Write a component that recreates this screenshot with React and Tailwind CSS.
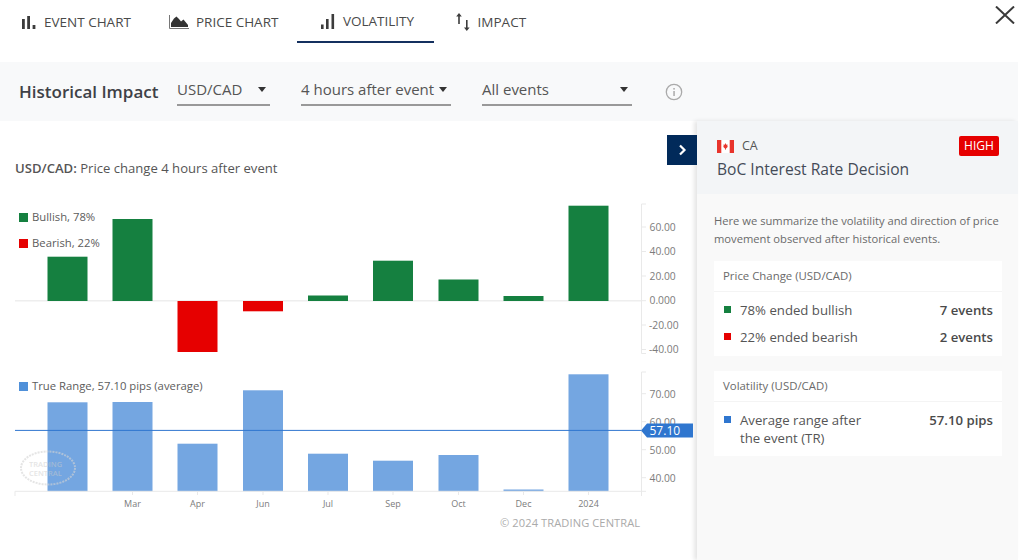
import React from "react";

const X = [47.5, 112.5, 177.5, 243, 308, 373, 438.5, 503.5, 568.5];
const UP = [256.7, 219, 301, 301, 295.5, 260.7, 279.5, 296, 205.7];
const DOWN = [301, 301, 352, 311.3, 301, 301, 301, 301, 301];
const RANGE = [402.3, 402, 443.7, 390.3, 453.7, 460.7, 455, 489.5, 374.3];
const MONTHS = ["", "Mar", "Apr", "Jun", "Jul", "Sep", "Oct", "Dec", "2024"];
const T1 = [["60.00", 227], ["40.00", 251.5], ["20.00", 276], ["0.000", 300.7], ["-20.00", 325], ["-40.00", 349.5]];
const T2 = [["70.00", 394], ["60.00", 422], ["50.00", 450], ["40.00", 478]];

function Tab({ icon, label, active, cls }) {
  return (
    <div className={`flex h-[43px] items-center pt-[1px] text-[13.5px] text-[#4a4a4a] ${active ? "border-b-2 border-[#14305f] pl-[23.5px] pr-[19.5px]" : ""} ${cls}`}>
      {icon}
      <span>{label}</span>
    </div>
  );
}

function BarsIcon() {
  return (
    <svg width="14" height="13" viewBox="0 0 14 13" fill="#3c3c3c">
      <rect x="0" y="3" width="2.8" height="10" />
      <rect x="5.2" y="0" width="2.8" height="13" />
      <rect x="10.6" y="9" width="2.8" height="4" />
    </svg>
  );
}
function AreaIcon() {
  return (
    <svg width="20" height="14" viewBox="0 0 20 14">
      <path d="M0.5 0V13.5H20" fill="none" stroke="#777" strokeWidth="1" />
      <path d="M2 12V8L5 3.5L7.5 1.5L10 4L12 6.5L14.5 4.5L19 10V12Z" fill="#333" />
    </svg>
  );
}
function VolIcon() {
  return (
    <svg width="14" height="15" viewBox="0 0 14 15" fill="#3c3c3c">
      <rect x="0" y="10.5" width="2.6" height="4.5" />
      <rect x="5" y="5" width="2.6" height="10" />
      <rect x="10.5" y="0" width="2.6" height="15" />
    </svg>
  );
}
function ArrowsIcon() {
  return (
    <svg width="14" height="18" viewBox="0 0 14 18" fill="#3c3c3c">
      <path d="M3 0L5.8 3.6H3.8V11H2.2V3.6H0.2Z" />
      <path d="M10.8 18L8 14.4H10V7H11.6V14.4H13.6Z" />
    </svg>
  );
}
function Caret() {
  return <span className="h-0 w-0 border-x-[4.5px] border-t-[5px] border-x-transparent border-t-[#333]" />;
}
function Select({ w, label, gap }) {
  return (
    <div className={`flex h-[28px] items-center justify-between border-b-2 border-[#999] pr-[4px] pb-[3px] text-[15px] text-[#555] ${w} ${gap}`}>
      <span>{label}</span>
      <Caret />
    </div>
  );
}
function Row({ color, label, value }) {
  return (
    <div className="flex justify-between text-[13.2px] leading-[18px]">
      <div className="flex">
        <span className={`mt-[5px] mr-[9px] h-[7px] w-[7px] ${color}`} />
        <span className="w-[140px] text-[#555]">{label}</span>
      </div>
      <span className="font-semibold text-[#4a4a4a]">{value}</span>
    </div>
  );
}

function Charts() {
  const tick = "#e9e9e9";
  const lab = { fontSize: 10.3, fill: "#7c7c7c" };
  return (
    <svg width="697" height="439" viewBox="0 121 697 439" className="absolute top-0 left-0">
      <line x1="15" x2="641" y1="300.8" y2="300.8" stroke="#eeeeee" strokeWidth="1.5" />
      {X.map((x, i) => (
        <rect key={i} x={x} y={UP[i]} width="40" height={DOWN[i] - UP[i]} fill={i === 2 || i === 3 ? "#e60000" : "#158040"} />
      ))}
      <path d="M646 204H641.5V353.5H646" fill="none" stroke={tick} />
      {T1.map(([t, y]) => (
        <g key={t}>
          <line x1="641.5" x2="646" y1={y} y2={y} stroke={tick} />
          <text x={t[0] === "-" ? 649 : 649.5} y={y + 3.7} style={lab}>{t}</text>
        </g>
      ))}

      {X.map((x, i) => (
        <rect key={i} x={x} y={RANGE[i]} width="40" height={491.3 - RANGE[i]} fill="#74a6e1" />
      ))}
      <ellipse cx="48" cy="468" rx="27" ry="16.5" fill="none" stroke="#d4d4d4" strokeWidth="2" strokeDasharray="2 1" opacity="0.6" />
      <text x="29" y="467" opacity="0.5" style={{ fontSize: 7.5, fill: "#cccccc", fontWeight: 600 }}>TRADING</text>
      <text x="29" y="475.5" opacity="0.5" style={{ fontSize: 7.5, fill: "#cccccc", fontWeight: 600 }}>CENTRAL</text>
      <path d="M15 496V491.3H641.5" fill="none" stroke={tick} />
      <path d="M646 372H641.5V496M641.5 491.3H646" fill="none" stroke={tick} />
      {T2.map(([t, y]) => (
        <g key={t}>
          <line x1="641.5" x2="646" y1={y - 0.3} y2={y - 0.3} stroke={tick} />
          <text x="649.5" y={y + 3.7} style={lab}>{t}</text>
        </g>
      ))}
      {X.map((x, i) =>
        i > 0 ? (
          <g key={i}>
            <line x1={x + 20} x2={x + 20} y1="491.3" y2="495" stroke={tick} />
            <text x={x + 20} y="507" textAnchor="middle" style={{ fontSize: 9, fill: "#7c7c7c" }}>{MONTHS[i]}</text>
          </g>
        ) : null
      )}
      <line x1="15" x2="641" y1="430.4" y2="430.4" stroke="#2f76cf" strokeWidth="1" />
      <path d="M641 430.4L647 423.5H693V437.5H647Z" fill="#2f76cf" />
      <text x="649.5" y="434.8" style={{ fontSize: 12, fill: "#ffffff", fontWeight: 500 }}>57.10</text>
    </svg>
  );
}

export default function App() {
  return (
    <div className="h-[560px] w-[1024px] overflow-hidden bg-white font-['Open_Sans',sans-serif]">
      <div className="w-[1018px]">
        <div className="relative flex h-[62px] items-start">
          <Tab cls="ml-[22px] gap-[8px]" icon={<BarsIcon />} label="EVENT CHART" />
          <Tab cls="ml-[38px] gap-[7px]" icon={<AreaIcon />} label="PRICE CHART" />
          <Tab cls="ml-[19px] gap-[8px]" active icon={<VolIcon />} label="VOLATILITY" />
          <Tab cls="ml-[22px] gap-[8px]" icon={<ArrowsIcon />} label="IMPACT" />
          <svg className="absolute top-[6px] left-[995px]" width="20" height="18" viewBox="0 0 20 18">
            <path d="M1 0.5L19 17.5M19 0.5L1 17.5" stroke="#3a3a3a" strokeWidth="2" fill="none" />
          </svg>
        </div>

        <div className="flex h-[59px] items-center bg-[#f8f9fa] pl-[19px]">
          <span className="w-[158px] text-[17px] font-semibold text-[#3e4146]">Historical Impact</span>
          <Select w="w-[93px]" label="USD/CAD" />
          <Select w="w-[150px]" gap="ml-[31px]" label="4 hours after event" />
          <Select w="w-[150px]" gap="ml-[31px]" label="All events" />
          <svg className="ml-[33px]" width="18" height="18" viewBox="0 0 18 18">
            <circle cx="9" cy="9" r="7.7" fill="none" stroke="#aaa" strokeWidth="1.3" />
            <rect x="8.3" y="8" width="1.5" height="5" fill="#aaa" />
            <rect x="8.3" y="5" width="1.5" height="1.6" fill="#aaa" />
          </svg>
        </div>

        <div className="flex h-[439px]">
          <div className="relative w-[697px] shrink-0">
            <Charts />
            <p className="absolute top-[38px] left-[15px] text-[13.1px] text-[#555]">
              <span className="font-semibold">USD/CAD:</span> Price change 4 hours after event
            </p>
            <div className="absolute top-[89px] left-[19px] flex flex-col gap-[12px] text-[11.3px] leading-[14px] text-[#5c5c5c]">
              <div className="flex items-center gap-[4px]"><span className="h-[9px] w-[9px] bg-[#158040]" />Bullish, 78%</div>
              <div className="flex items-center gap-[4px]"><span className="h-[9px] w-[9px] bg-[#e60000]" />Bearish, 22%</div>
            </div>
            <div className="absolute top-[258px] left-[19px] flex items-center gap-[4px] text-[11.3px] leading-[14px] text-[#5c5c5c]">
              <span className="h-[9px] w-[9px] bg-[#4f90d9]" />True Range, 57.10 pips (average)
            </div>
            <div className="absolute top-[394px] left-[500px] text-[11.1px] tracking-[0.1px] text-[#aaa]">© 2024 TRADING CENTRAL</div>
            <div className="absolute top-[14px] left-[667px] flex h-[30px] w-[30px] items-center justify-center bg-[#012a5a]">
              <svg width="9" height="12" viewBox="0 0 9 12">
                <path d="M2 1.5L6.5 6L2 10.5" fill="none" stroke="#fff" strokeWidth="2.2" />
              </svg>
            </div>
          </div>

          <div className="w-[321px] bg-[#f9f9f9] shadow-[-3px_0_4px_rgba(0,0,0,0.10)]">
            <div className="h-[73px] bg-[#f3f5f7] px-[20px] pt-[15px]">
              <div className="flex items-center justify-between">
                <div className="flex items-center gap-[8px] text-[12.5px] text-[#555]">
                  <svg width="17" height="13" viewBox="0 0 17 13">
                    <rect width="17" height="13" fill="#fff" />
                    <rect width="4.3" height="13" fill="#e8342c" />
                    <rect x="12.7" width="4.3" height="13" fill="#e8342c" />
                    <path d="M8.5 3L9.3 4.8L10.6 4.4L10.2 6.6L11.2 6.6L9 8.4L8.8 9.8H8.2L8 8.4L5.8 6.6L6.8 6.6L6.4 4.4L7.7 4.8Z" fill="#e8342c" />
                  </svg>
                  CA
                </div>
                <span className="mr-[-1px] flex h-[20px] w-[40px] items-center justify-center rounded-[2px] bg-[#e60000] text-[12px] text-white">HIGH</span>
              </div>
              <div className="mt-[2px] text-[15.6px] text-[#444b57]">BoC Interest Rate Decision</div>
            </div>
            <div className="px-[17px] pt-[18px]">
              <p className="w-[292px] text-[11.2px] leading-[18px] text-[#6a6a6a]">
                Here we summarize the volatility and direction of price movement observed after historical events.
              </p>
              <div className="mt-[13px] h-[95px] w-[288px] bg-white">
                <div className="flex h-[31px] items-center border-b border-[#f4f4f4] px-[9px] text-[11.4px] text-[#6a6a6a]">Price Change (USD/CAD)</div>
                <div className="flex flex-col gap-[9px] pt-[9px] pr-[9px] pl-[10px]">
                  <Row color="bg-[#158040]" label="78% ended bullish" value="7 events" />
                  <Row color="bg-[#e60000]" label="22% ended bearish" value="2 events" />
                </div>
              </div>
              <div className="mt-[15px] h-[85px] w-[288px] bg-white">
                <div className="flex h-[31px] items-center border-b border-[#f4f4f4] px-[9px] text-[11.4px] text-[#6a6a6a]">Volatility (USD/CAD)</div>
                <div className="pt-[9px] pr-[9px] pl-[10px]">
                  <Row color="bg-[#2f76cf]" label="Average range after the event (TR)" value="57.10 pips" />
                </div>
              </div>
            </div>
          </div>
        </div>
      </div>
    </div>
  );
}
